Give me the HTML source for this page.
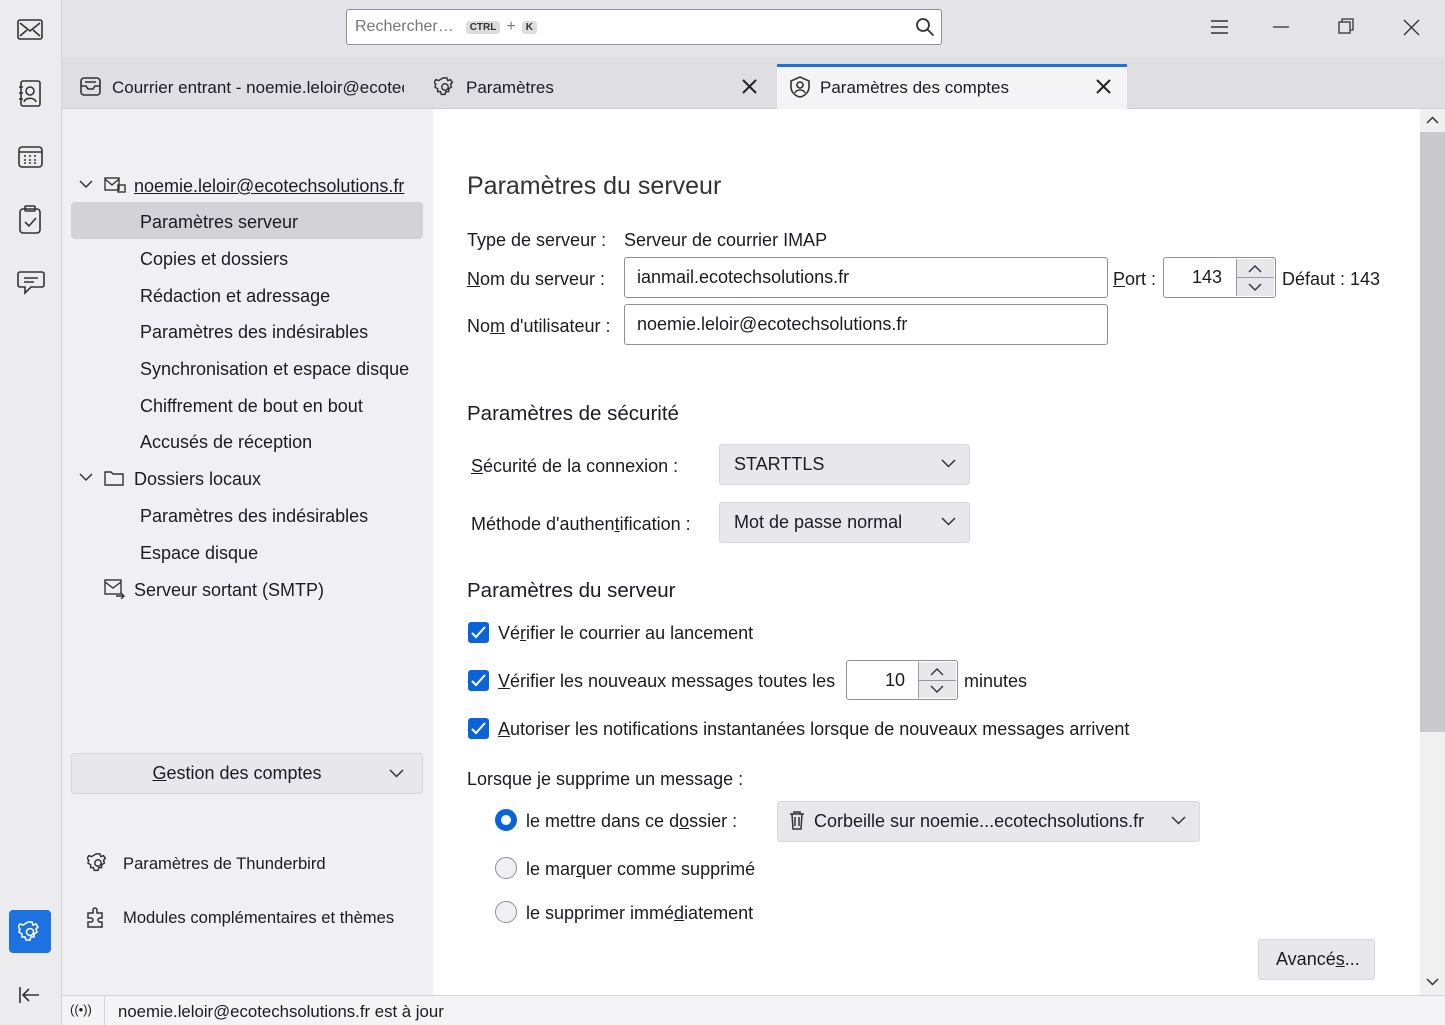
<!DOCTYPE html>
<html><head><meta charset="utf-8"><style>
*{box-sizing:border-box;margin:0;padding:0}
body{width:1445px;height:1025px;overflow:hidden;font-family:"Liberation Sans",sans-serif;color:#1c1b22;font-size:18px;background:#fff;position:relative}
.a{position:absolute;white-space:nowrap}
u{text-decoration:underline}
.rail{left:0;top:0;width:62px;height:1025px;background:#ececef;border-right:1px solid #d4d4d8}
.top{left:62px;top:0;width:1383px;height:57px;background:#e4e4e9}
.tabs{left:62px;top:57px;width:1383px;height:52px;background:#dedee3;border-bottom:1px solid #cfcfd4}
.lp{left:62px;top:109px;width:371px;height:886px;background:#f0f0f4}
.status{left:62px;top:995px;width:1383px;height:30px;background:#f4f4f6;border-top:1px solid #d4d4d8}
.inp{background:#fff;border:1px solid #8f8f9d;border-radius:3px;padding-left:12px;display:flex;align-items:center}
.sel{background:#e8e8ec;border:1px solid #d8d8dc;border-radius:3px;padding-left:14px;display:flex;align-items:center}
.cb{width:21px;height:21px;background:#0a64d8;border-radius:3px}
.rad{width:22px;height:22px;border-radius:50%;border:1px solid #8f8f9d;background:#f0f0f4}
svg{position:absolute}
</style></head><body>
<div class="a rail"></div>
<svg style="left:17px;top:19px" width="26" height="22" viewBox="0 0 26 22" fill="none" stroke="#333" stroke-width="1.6"><rect x="1" y="1" width="24" height="19" rx="2"/><path d="M3 4l10 8 10-8M3 17l7-6M23 17l-7-6"/></svg>
<svg style="left:18px;top:80px" width="24" height="28" viewBox="0 0 24 28" fill="none" stroke="#333" stroke-width="1.6"><rect x="3" y="1" width="19" height="25" rx="2"/><circle cx="12" cy="11" r="4"/><path d="M6 22c1-5 11-5 12 0M1 7h4M1 13h4M1 19h4"/></svg>
<svg style="left:18px;top:145px" width="25" height="24" viewBox="0 0 25 24" fill="none" stroke="#333" stroke-width="1.6"><rect x="1" y="2" width="23" height="20" rx="3"/><path d="M1 7h23M6 11h2M11 11h2M16 11h2M6 15h2M11 15h2M16 15h2M6 18h2M11 18h2M16 18h2"/></svg>
<svg style="left:19px;top:205px" width="22" height="30" viewBox="0 0 22 30" fill="none" stroke="#333" stroke-width="1.6"><rect x="1" y="4" width="20" height="24" rx="3"/><rect x="6" y="1" width="10" height="5" rx="1"/><path d="M6 17l4 4 7-8"/></svg>
<svg style="left:17px;top:270px" width="28" height="26" viewBox="0 0 28 26" fill="none" stroke="#333" stroke-width="1.6"><path d="M3 2h22a2 2 0 0 1 2 2v11a2 2 0 0 1-2 2H14l-6 6v-6H3a2 2 0 0 1-2-2V4a2 2 0 0 1 2-2z"/><path d="M7 8h14M7 12h10"/></svg>
<div class="a" style="left:9px;top:910px;width:42px;height:43px;background:#1c72e0;border-radius:4px"></div>
<svg style="left:18px;top:920px" width="24" height="24" viewBox="0 0 24 24" fill="none" stroke="#fff" stroke-width="1.6"><circle cx="12" cy="12" r="3.5"/><path d="M10 2h4l1 3 3-1 2 3-2 2 1 3-3 2 0 3-3 0-1 3h-4l-1-3-3 0 0-3-3-2 1-3-2-2 2-3 3 1z"/></svg>
<svg style="left:18px;top:985px" width="24" height="20" fill="none" stroke="#333" stroke-width="1.6"><path d="M2 2v16M21 10H5M11 4l-6 6 6 6"/></svg>

<div class="a top"></div>
<div class="a inp" style="left:346px;top:9px;width:596px;height:36px;color:#777;font-size:16px;padding-left:8px">Rechercher… <span style="margin-left:12px;font-size:10px;background:#ddd;border-radius:3px;padding:1px 4px;color:#333;font-weight:bold">CTRL</span><span style="margin:0 6px">+</span><span style="font-size:10px;background:#ddd;border-radius:3px;padding:1px 4px;color:#333;font-weight:bold">K</span></div>
<svg style="left:915px;top:17px" width="20" height="20" viewBox="0 0 20 20" fill="none" stroke="#333" stroke-width="1.8"><circle cx="8" cy="8" r="6"/><path d="M12.5 12.5l6 6"/></svg>
<svg style="left:1210px;top:19px" width="20" height="16" fill="none" stroke="#333" stroke-width="1.5"><path d="M1 2h17M1 8h17M1 14h17"/></svg>
<svg style="left:1273px;top:26px" width="18" height="4" stroke="#333" stroke-width="1.3"><path d="M0 1h16"/></svg>
<svg style="left:1338px;top:18px" width="18" height="18" fill="none" stroke="#333" stroke-width="1.3"><rect x="1" y="4" width="11" height="11"/><path d="M4 4V1h11v11h-3"/></svg>
<svg style="left:1403px;top:19px" width="17" height="17" stroke="#333" stroke-width="1.3"><path d="M1 1l15 15M16 1L1 16"/></svg>

<div class="a tabs"></div>
<svg style="left:80px;top:77px" width="21" height="20" fill="none" stroke="#333" stroke-width="1.6"><rect x="1" y="1" width="19" height="17" rx="3"/><path d="M1 9h5l2 3h5l2-3h5M5 5h11"/></svg>
<div class="a" style="left:112px;top:78px;width:292px;overflow:hidden;font-size:17px">Courrier entrant - noemie.leloir@ecotec</div>
<svg style="left:434px;top:76px" width="22" height="22" viewBox="0 0 24 24" fill="none" stroke="#333" stroke-width="1.6"><circle cx="12" cy="12" r="3.5"/><path d="M10 2h4l1 3 3-1 2 3-2 2 1 3-3 2 0 3-3 0-1 3h-4l-1-3-3 0 0-3-3-2 1-3-2-2 2-3 3 1z"/></svg>
<div class="a" style="left:466px;top:78px;font-size:17px">Paramètres</div>
<svg style="left:742px;top:79px" width="15" height="15" stroke="#222" stroke-width="2"><path d="M1 1l13 13M14 1L1 14"/></svg>
<div class="a" style="left:777px;top:64px;width:350px;height:45px;background:#f4f4f6;border-top:3px solid #1c72e0"></div>
<svg style="left:789px;top:76px" width="22" height="22" fill="none" stroke="#333" stroke-width="1.6"><path d="M11 1l9 4v6c0 5-4 9-9 10C6 20 2 16 2 11V5z"/><circle cx="11" cy="9" r="3"/><path d="M6 17c1-4 9-4 10 0"/></svg>
<div class="a" style="left:820px;top:78px;font-size:17px">Paramètres des comptes</div>
<svg style="left:1096px;top:79px" width="15" height="15" stroke="#222" stroke-width="2"><path d="M1 1l13 13M14 1L1 14"/></svg>

<div class="a lp"></div>
<svg style="left:79px;top:180px" width="14" height="9" fill="none" stroke="#333" stroke-width="1.5"><path d="M1 1l6 6 6-6"/></svg>
<svg style="left:104px;top:177px" width="22" height="16" fill="none" stroke="#333" stroke-width="1.4"><rect x="1" y="1" width="14" height="12"/><path d="M1 2l7 6 7-6"/><rect x="14" y="8" width="7" height="7"/></svg>
<div class="a" style="left:134px;top:176px"><u>noemie.leloir@ecotechsolutions.fr</u></div>
<div class="a" style="left:71px;top:202px;width:352px;height:37px;background:#d2d2d7;border-radius:4px"></div>
<div class="a" style="left:140px;top:212px">Paramètres serveur</div>
<div class="a" style="left:140px;top:249px">Copies et dossiers</div>
<div class="a" style="left:140px;top:286px">Rédaction et adressage</div>
<div class="a" style="left:140px;top:322px">Paramètres des indésirables</div>
<div class="a" style="left:140px;top:359px">Synchronisation et espace disque</div>
<div class="a" style="left:140px;top:396px">Chiffrement de bout en bout</div>
<div class="a" style="left:140px;top:432px">Accusés de réception</div>
<svg style="left:79px;top:473px" width="14" height="9" fill="none" stroke="#333" stroke-width="1.5"><path d="M1 1l6 6 6-6"/></svg>
<svg style="left:104px;top:470px" width="20" height="16" fill="none" stroke="#333" stroke-width="1.4"><path d="M1 2h6l2 2h10v11H1z"/></svg>
<div class="a" style="left:134px;top:469px">Dossiers locaux</div>
<div class="a" style="left:140px;top:506px">Paramètres des indésirables</div>
<div class="a" style="left:140px;top:543px">Espace disque</div>
<svg style="left:104px;top:579px" width="22" height="20" fill="none" stroke="#333" stroke-width="1.4"><rect x="1" y="1" width="16" height="14"/><path d="M1 3l8 6 8-6M12 17h8M17 14l3 3-3 3"/></svg>
<div class="a" style="left:134px;top:580px">Serveur sortant (SMTP)</div>
<div class="a sel" style="left:71px;top:753px;width:352px;height:41px;justify-content:center;padding:0 20px 0 0"><span><u>G</u>estion des comptes</span></div>
<svg style="left:389px;top:769px" width="15" height="9" fill="none" stroke="#333" stroke-width="1.5"><path d="M1 1l6.5 6.5L14 1"/></svg>
<svg style="left:87px;top:852px" width="22" height="22" viewBox="0 0 24 24" fill="none" stroke="#333" stroke-width="1.6"><circle cx="12" cy="12" r="3.5"/><path d="M10 2h4l1 3 3-1 2 3-2 2 1 3-3 2 0 3-3 0-1 3h-4l-1-3-3 0 0-3-3-2 1-3-2-2 2-3 3 1z"/></svg>
<div class="a" style="left:123px;top:854px;font-size:16.6px">Paramètres de Thunderbird</div>
<svg style="left:86px;top:905px" width="24" height="24" fill="none" stroke="#333" stroke-width="1.5"><path d="M2 8h5V5a2 2 0 0 1 4 0v3h5v5h-2a2 2 0 0 0 0 4h2v5H2v-5h3a2 2 0 0 0 0-4H2z"/></svg>
<div class="a" style="left:123px;top:908px;font-size:16.6px">Modules complémentaires et thèmes</div>

<div class="a" style="left:1420px;top:109px;width:25px;height:886px;background:#f0f0f0"></div>
<div class="a" style="left:1420px;top:132px;width:25px;height:600px;background:#c9c9cc"></div>
<svg style="left:1426px;top:116px" width="13" height="8" fill="none" stroke="#333" stroke-width="1.5"><path d="M1 7l5.5-5.5L12 7"/></svg>
<svg style="left:1426px;top:978px" width="13" height="8" fill="none" stroke="#333" stroke-width="1.5"><path d="M1 1l5.5 5.5L12 1"/></svg>

<div class="a" style="left:467px;top:172px;font-size:25px;color:#333;font-weight:300">Paramètres du serveur</div>
<div class="a" style="left:467px;top:230px">Type de serveur :</div>
<div class="a" style="left:624px;top:230px">Serveur de courrier IMAP</div>
<div class="a" style="left:467px;top:269px"><u>N</u>om du serveur :</div>
<div class="a inp" style="left:624px;top:257px;width:484px;height:41px">ianmail.ecotechsolutions.fr</div>
<div class="a" style="left:1113px;top:269px"><u>P</u>ort :</div>
<div class="a inp" style="left:1163px;top:257px;width:113px;height:41px;padding-left:28px">143</div>
<div class="a" style="left:1236px;top:259px;width:38px;height:37px;background:#e8e8ec;border-left:1px solid #999"></div>
<div class="a" style="left:1237px;top:277px;width:37px;height:1px;background:#999"></div>
<svg style="left:1248px;top:265px" width="14" height="8" fill="none" stroke="#333" stroke-width="1.4"><path d="M1 7l6-6 6 6"/></svg>
<svg style="left:1248px;top:283px" width="14" height="8" fill="none" stroke="#333" stroke-width="1.4"><path d="M1 1l6 6 6-6"/></svg>
<div class="a" style="left:1282px;top:269px">Défaut : 143</div>
<div class="a" style="left:467px;top:316px">No<u>m</u> d'utilisateur :</div>
<div class="a inp" style="left:624px;top:304px;width:484px;height:41px">noemie.leloir@ecotechsolutions.fr</div>

<div class="a" style="left:467px;top:402px;font-size:20.5px">Paramètres de sécurité</div>
<div class="a" style="left:471px;top:456px"><u>S</u>écurité de la connexion :</div>
<div class="a sel" style="left:719px;top:444px;width:251px;height:41px">STARTTLS</div>
<svg style="left:941px;top:459px" width="15" height="9" fill="none" stroke="#333" stroke-width="1.5"><path d="M1 1l6.5 6.5L14 1"/></svg>
<div class="a" style="left:471px;top:514px">Méthode d'authen<u>t</u>ification :</div>
<div class="a sel" style="left:719px;top:502px;width:251px;height:41px">Mot de passe normal</div>
<svg style="left:941px;top:517px" width="15" height="9" fill="none" stroke="#333" stroke-width="1.5"><path d="M1 1l6.5 6.5L14 1"/></svg>

<div class="a" style="left:467px;top:579px;font-size:20.5px">Paramètres du serveur</div>
<div class="a cb" style="left:468px;top:622px"></div><svg style="left:471px;top:626px" width="15" height="13" fill="none" stroke="#fff" stroke-width="2"><path d="M1 7l4 4 9-10"/></svg>
<div class="a" style="left:498px;top:623px">Vé<u>r</u>ifier le courrier au lancement</div>
<div class="a cb" style="left:468px;top:670px"></div><svg style="left:471px;top:674px" width="15" height="13" fill="none" stroke="#fff" stroke-width="2"><path d="M1 7l4 4 9-10"/></svg>
<div class="a" style="left:498px;top:671px"><u>V</u>érifier les nouveaux messages toutes les</div>
<div class="a inp" style="left:846px;top:660px;width:112px;height:40px;padding-left:38px">10</div>
<div class="a" style="left:918px;top:662px;width:38px;height:36px;background:#e8e8ec;border-left:1px solid #999"></div>
<div class="a" style="left:919px;top:680px;width:37px;height:1px;background:#999"></div>
<svg style="left:930px;top:668px" width="14" height="8" fill="none" stroke="#333" stroke-width="1.4"><path d="M1 7l6-6 6 6"/></svg>
<svg style="left:930px;top:685px" width="14" height="8" fill="none" stroke="#333" stroke-width="1.4"><path d="M1 1l6 6 6-6"/></svg>
<div class="a" style="left:964px;top:671px">minutes</div>
<div class="a cb" style="left:468px;top:718px"></div><svg style="left:471px;top:722px" width="15" height="13" fill="none" stroke="#fff" stroke-width="2"><path d="M1 7l4 4 9-10"/></svg>
<div class="a" style="left:498px;top:719px"><u>A</u>utoriser les notifications instantanées lorsque de nouveaux messages arrivent</div>
<div class="a" style="left:467px;top:769px">Lorsque je supprime un message :</div>
<div class="a rad" style="left:495px;top:809px;border:6px solid #0a64d8;background:#fff"></div>
<div class="a" style="left:526px;top:811px">le mettre dans ce d<u>o</u>ssier :</div>
<div class="a sel" style="left:777px;top:801px;width:423px;height:41px;padding-left:36px">Corbeille sur noemie...ecotechsolutions.fr</div>
<svg style="left:789px;top:811px" width="16" height="19" fill="none" stroke="#333" stroke-width="1.5"><path d="M1 3h14M5 3V1h6v2M3 3l1 15h8l1-15M6 6v9M10 6v9"/></svg>
<svg style="left:1171px;top:816px" width="15" height="9" fill="none" stroke="#333" stroke-width="1.5"><path d="M1 1l6.5 6.5L14 1"/></svg>
<div class="a rad" style="left:495px;top:857px"></div>
<div class="a" style="left:526px;top:859px">le mar<u>q</u>uer comme supprimé</div>
<div class="a rad" style="left:495px;top:901px"></div>
<div class="a" style="left:526px;top:903px">le supprimer immé<u>d</u>iatement</div>
<div class="a sel" style="left:1258px;top:939px;width:117px;height:41px;padding-left:17px">Avancé<u>s</u>...</div>

<div class="a status"></div>
<div class="a" style="left:70px;top:1002px;font-size:13px">((•))</div>
<div class="a" style="left:104px;top:996px;width:1px;height:29px;background:#d4d4d8"></div>
<div class="a" style="left:118px;top:1002px;font-size:16.8px">noemie.leloir@ecotechsolutions.fr est à jour</div>
</body></html>
